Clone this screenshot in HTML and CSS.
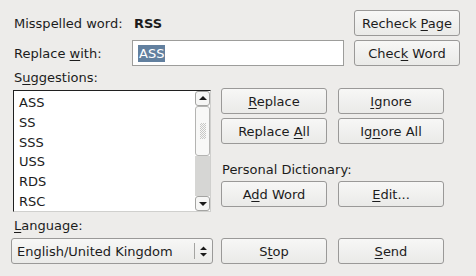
FILE: index.html
```html
<!DOCTYPE html>
<html lang="en">
<head>
    <meta charset="UTF-8">
    <title>Spell Check</title>
    <link rel="stylesheet" href="styles.css">
</head>
<body>

<div class="dialog">
    <div class="top-row">
        <span class="label">Misspelled word:</span>
        <span class="word">RSS</span>
        <button class="btn">Recheck <u>P</u>age</button>
    </div>
    <div class="top-row">
        <span class="label">Replace <u>w</u>ith:</span>
        <div class="entry"><span class="selected">ASS</span></div>
        <button class="btn">Chec<u>k</u> Word</button>
    </div>

    <div class="middle">
        <div class="left">
            <div class="label">S<u>u</u>ggestions:</div>
            <div class="listbox">
                <ul class="items">
                    <li>ASS</li>
                    <li>SS</li>
                    <li>SSS</li>
                    <li>USS</li>
                    <li>RDS</li>
                    <li>RSC</li>
                </ul>
                <div class="scrollbar">
                    <div class="arrow up"></div>
                    <div class="thumb"><span class="grip"></span></div>
                    <div class="track"></div>
                    <div class="arrow down"></div>
                </div>
            </div>
        </div>
        <div class="right">
            <div class="btn-row">
                <button class="btn"><u>R</u>eplace</button>
                <button class="btn"><u>I</u>gnore</button>
            </div>
            <div class="btn-row">
                <button class="btn">Replace <u>A</u>ll</button>
                <button class="btn">Ig<u>n</u>ore All</button>
            </div>
            <div class="label dict-label">Personal Dictionary:</div>
            <div class="btn-row">
                <button class="btn">A<u>d</u>d Word</button>
                <button class="btn"><u>E</u>dit...</button>
            </div>
        </div>
    </div>

    <div class="label lang-label"><u>L</u>anguage:</div>
    <div class="bottom-row">
        <div class="combo">
            <span class="combo-text">English/United Kingdom</span>
            <span class="combo-sep"></span>
            <span class="combo-arrows">
                <svg width="7" height="11" viewBox="0 0 7 11"><path d="M3.5 0.5 L7 4 L0 4 Z M0 7 L7 7 L3.5 10.5 Z" fill="#1a1a1a"/></svg>
            </span>
        </div>
        <button class="btn">S<u>t</u>op</button>
        <button class="btn"><u>S</u>end</button>
    </div>
</div>

</body>
</html>
```

FILE: styles.css
```css
/* Basic dialog look */
body {
    margin: 0;
    background-color: #edecea;
    font-family: "DejaVu Sans", sans-serif;
    font-size: 13px;
    color: #1c1c1c;
}

u {
    text-decoration-thickness: 1px;
    text-underline-offset: 2px;
}

.dialog {
    width: 476px;
    height: 276px;
    padding-top: 10px;
    box-sizing: border-box;
}

.label {
    line-height: 15px;
}

/* Top rows */
.top-row {
    display: flex;
    align-items: center;
    height: 26px;
    margin-bottom: 4px;
    padding-left: 14px;
}

.top-row .label {
    width: 118px;
}

.word {
    font-weight: bold;
    width: 212px;
    padding-left: 2px;
    box-sizing: border-box;
}

.entry {
    width: 212px;
    height: 26px;
    box-sizing: border-box;
    border: 1px solid #9d9d9b;
    background-color: #fff;
    display: flex;
    align-items: center;
    padding-left: 5px;
}

.selected {
    background-color: #62809f;
    color: #fff;
    line-height: 17px;
    padding: 0 1px;
}

.top-row .btn {
    margin-left: 10px;
}

/* Buttons */
.btn {
    width: 106px;
    height: 26px;
    box-sizing: border-box;
    border: 1px solid #9a9998;
    border-radius: 3px;
    background: linear-gradient(#f7f7f6, #eaeae8);
    font-family: "DejaVu Sans", sans-serif;
    font-size: 13px;
    color: #1c1c1c;
    padding: 0;
    cursor: pointer;
}

/* Middle part */
.middle {
    display: flex;
    margin-top: 1px;
}

.left {
    margin-left: 13px;
    width: 198px;
}

.left .label {
    margin-left: 1px;
    margin-bottom: 5px;
}

.listbox {
    display: flex;
    height: 122px;
    box-sizing: border-box;
    border-top: 1px solid #202020;
    border-left: 1px solid #202020;
    border-bottom: 1px solid #d0d0ce;
    border-right: 1px solid #d0d0ce;
    background-color: #fff;
}

.items {
    list-style: none;
    margin: 0;
    padding: 2px 0 0;
    flex: 1;
}

.items li {
    height: 19.8px;
    line-height: 19.8px;
    padding-left: 5px;
}

.scrollbar {
    width: 15px;
    display: flex;
    flex-direction: column;
}

.arrow {
    height: 15px;
    box-sizing: border-box;
    border: 1px solid #a4a4a2;
    border-radius: 3px;
    background: #f6f6f5;
    position: relative;
}

.arrow::after {
    content: "";
    position: absolute;
    left: 3px;
    border-left: 4px solid transparent;
    border-right: 4px solid transparent;
}

.arrow.up::after {
    top: 4px;
    border-bottom: 4px solid #1a1a1a;
}

.arrow.down::after {
    top: 5px;
    border-top: 4px solid #1a1a1a;
}

.thumb {
    height: 50px;
    box-sizing: border-box;
    border: 1px solid #b4b4b2;
    border-radius: 3px;
    background: #f8f8f7;
    display: flex;
    align-items: center;
    justify-content: center;
}

.grip {
    width: 6px;
    height: 16px;
    background-image: repeating-conic-gradient(#c8c8c6 0 25%, transparent 0 50%);
    background-size: 2px 2px;
}

.track {
    flex: 1;
    background-color: #d6d6d4;
}

.right {
    margin-left: 10px;
    padding-top: 18px;
}

.btn-row {
    display: flex;
    gap: 11px;
    margin-bottom: 4px;
}

.dict-label {
    margin-top: 18px;
    margin-bottom: 4px;
    margin-left: 1px;
}

/* Bottom part */
.lang-label {
    margin-top: 6px;
    margin-left: 14px;
    margin-bottom: 5px;
}

.bottom-row {
    display: flex;
    gap: 8px;
    margin-left: 11px;
}

.bottom-row .btn + .btn {
    margin-left: 3px;
}

.combo {
    width: 202px;
    height: 26px;
    box-sizing: border-box;
    border: 1px solid #9a9998;
    border-radius: 3px;
    background: linear-gradient(#f7f7f6, #eaeae8);
    display: flex;
    align-items: center;
}

.combo-text {
    flex: 1;
    padding-left: 5px;
}

.combo-sep {
    width: 1px;
    height: 16px;
    background-color: #a4a4a2;
}

.combo-arrows {
    width: 17px;
    display: flex;
    justify-content: center;
    align-items: center;
}

.combo-arrows svg {
    display: block;
}
```
